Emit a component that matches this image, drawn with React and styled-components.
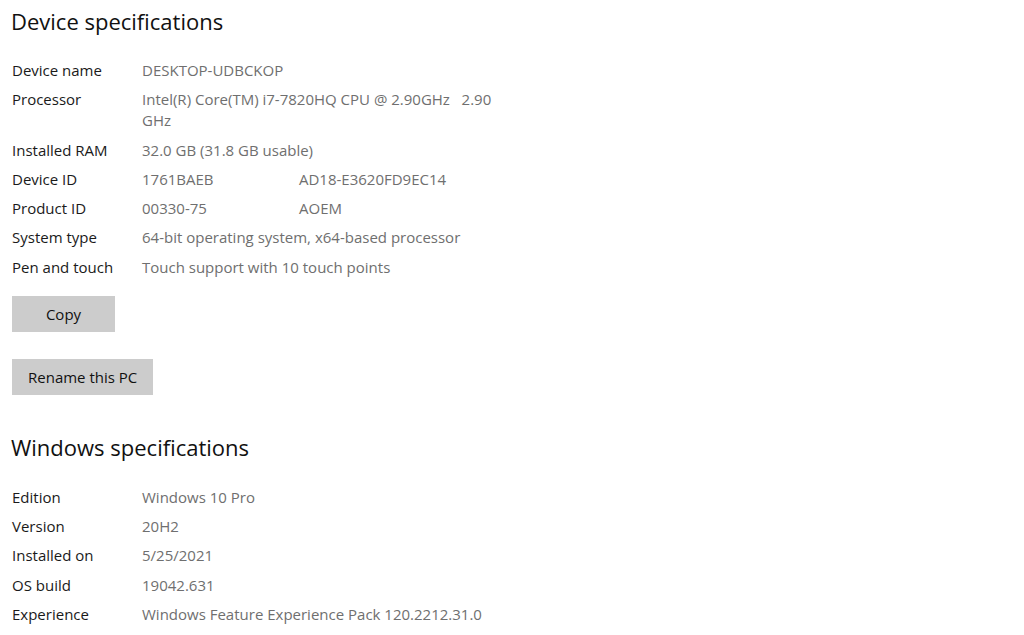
import React from "react";
import styled, { createGlobalStyle } from "styled-components";

const Global = createGlobalStyle`
  html, body { margin: 0; padding: 0; background: #ffffff; }
  body { font-family: "Open Sans", "Noto Sans", sans-serif; }
`;

const Page = styled.div`
  width: 1024px;
  height: 635px;
  overflow: hidden;
  box-sizing: border-box;
  padding: 6px 0 0 11px;
  background: #fff;
  display: flex;
  flex-direction: column;
`;

const Title = styled.h2`
  margin: ${(p) => p.$mt || 0}px 0 0 0;
  font-size: 22px;
  font-weight: 400;
  line-height: 30px;
  color: #111;
`;

const Specs = styled.div`
  display: grid;
  grid-template-columns: 130px 420px;
  margin-top: ${(p) => p.$mt}px;
  margin-left: 1px;
  --pad-bottom: ${(p) => p.$padBottom}px;
`;

const Label = styled.div`
  padding: 4px 0 var(--pad-bottom);
  font-size: 15px;
  line-height: 21px;
  color: #1a1a1a;
`;

const Value = styled.div`
  padding: 4px 0 var(--pad-bottom);
  font-size: 15px;
  line-height: 21px;
  color: #6f6f6f;
  white-space: pre-wrap;
  display: flex;
  flex-wrap: wrap;
`;

const Part = styled.span`
  width: ${(p) => p.$w || "auto"};
`;

const Button = styled.button`
  margin: ${(p) => p.$mt}px 0 0 1px;
  align-self: flex-start;
  min-width: 103px;
  height: 36px;
  padding: 0 16px;
  border: none;
  background: #cccccc;
  color: #111;
  font-family: "Open Sans", "Noto Sans", sans-serif;
  font-size: 15px;
  cursor: default;
`;

const Row = ({ label, children }) => (
  <>
    <Label>{label}</Label>
    <Value>{children}</Value>
  </>
);

export default function App() {
  return (
    <>
      <Global />
      <Page>
        <Title>Device specifications</Title>
        <Specs $mt={20} $padBottom={4.25}>
          <Row label="Device name">DESKTOP-UDBCKOP</Row>
          <Row label="Processor">
            {"Intel(R) Core(TM) i7-7820HQ CPU @ 2.90GHz   2.90\nGHz"}
          </Row>
          <Row label="Installed RAM">32.0 GB (31.8 GB usable)</Row>
          <Row label="Device ID">
            <Part $w="157px">1761BAEB</Part>
            <Part>AD18-E3620FD9EC14</Part>
          </Row>
          <Row label="Product ID">
            <Part $w="157px">00330-75</Part>
            <Part>AOEM</Part>
          </Row>
          <Row label="System type">64-bit operating system, x64-based processor</Row>
          <Row label="Pen and touch">Touch support with 10 touch points</Row>
        </Specs>
        <Button $mt={14}>Copy</Button>
        <Button $mt={27}>Rename this PC</Button>
        <Title $mt={37}>Windows specifications</Title>
        <Specs $mt={21} $padBottom={4.25}>
          <Row label="Edition">Windows 10 Pro</Row>
          <Row label="Version">20H2</Row>
          <Row label="Installed on">5/25/2021</Row>
          <Row label="OS build">19042.631</Row>
          <Row label="Experience">Windows Feature Experience Pack 120.2212.31.0</Row>
        </Specs>
      </Page>
    </>
  );
}
